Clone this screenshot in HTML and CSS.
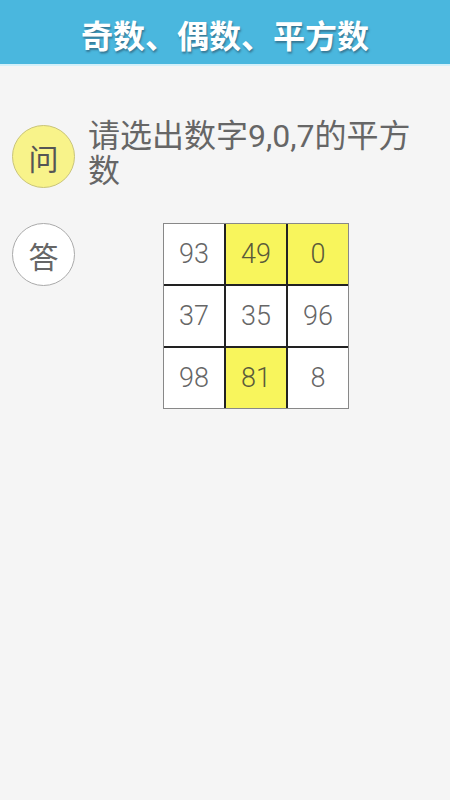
FILE: index.html
```html
<!DOCTYPE html>
<html lang="zh">
<head>
<meta charset="utf-8">
<link rel="stylesheet" href="styles.css">
</head>
<body>
<header class="topbar"><h1 class="title">奇数、偶数、平方数</h1></header>
<main class="content">
  <section class="row question">
    <div class="badge badge-q">问</div>
    <p class="qtext">请选出数字9,0,7的平方数</p>
  </section>
  <section class="row answer">
    <div class="badge badge-a">答</div>
    <div class="answer-area">
      <div class="grid">
        <div class="cell">93</div>
        <div class="cell on">49</div>
        <div class="cell on">0</div>
        <div class="cell">37</div>
        <div class="cell">35</div>
        <div class="cell">96</div>
        <div class="cell">98</div>
        <div class="cell on">81</div>
        <div class="cell">8</div>
      </div>
    </div>
  </section>
</main>
</body>
</html>
```
FILE: styles.css
```css
html, body {
  margin: 0;
  padding: 0;
}
body {
  width: 450px;
  height: 800px;
  background: #f5f5f5;
  font-family: Roboto, "Noto Sans CJK SC", sans-serif;
  color: #666;
}
.topbar {
  height: 64px;
  background: #4ab7de;
  border-bottom: 2px solid #d4f0f9;
  display: flex;
  align-items: center;
  justify-content: center;
}
.title {
  margin: 4px 0 0 0;
  font-family: "Noto Sans CJK SC", sans-serif;
  font-size: 32px;
  font-weight: 700;
  color: #fff;
  text-shadow: 1px 2px 2px rgba(40, 70, 90, 0.55);
}
.content {
  padding-top: 59px;
}
.row {
  display: flex;
  padding: 0 13px 0 12px;
}
.question {
  gap: 13px;
}
.badge {
  flex: none;
  width: 61px;
  height: 61px;
  border-radius: 50%;
  border: 1px solid #aaa;
  display: flex;
  align-items: center;
  justify-content: center;
  font-family: "Noto Sans CJK SC", sans-serif;
  font-size: 30px;
  line-height: 1;
}
.badge-q {
  background: #f8f38a;
  color: #555;
  border-color: #c9c47a;
}
.badge-a {
  background: #fff;
  color: #666;
}
.qtext {
  margin: -6px 0 0 0;
  flex: 1;
  font-family: Roboto, "Noto Sans CJK SC", sans-serif;
  font-size: 32px;
  line-height: 35px;
  color: #666;
}
.answer {
  margin-top: 34px;
}
.answer-area {
  flex: 1;
  display: flex;
  justify-content: center;
}
.grid {
  display: grid;
  grid-template-columns: repeat(3, 60px);
  grid-template-rows: repeat(3, 60px);
  gap: 2px;
  background: #222;
  border: 1px solid #888;
}
.cell {
  background: #fff;
  display: flex;
  align-items: center;
  justify-content: center;
  font-family: Roboto, sans-serif;
  font-size: 27px;
  font-weight: 300;
  color: #666;
}
.cell.on {
  background: #f8f55c;
  color: #5a5a3a;
}
```
